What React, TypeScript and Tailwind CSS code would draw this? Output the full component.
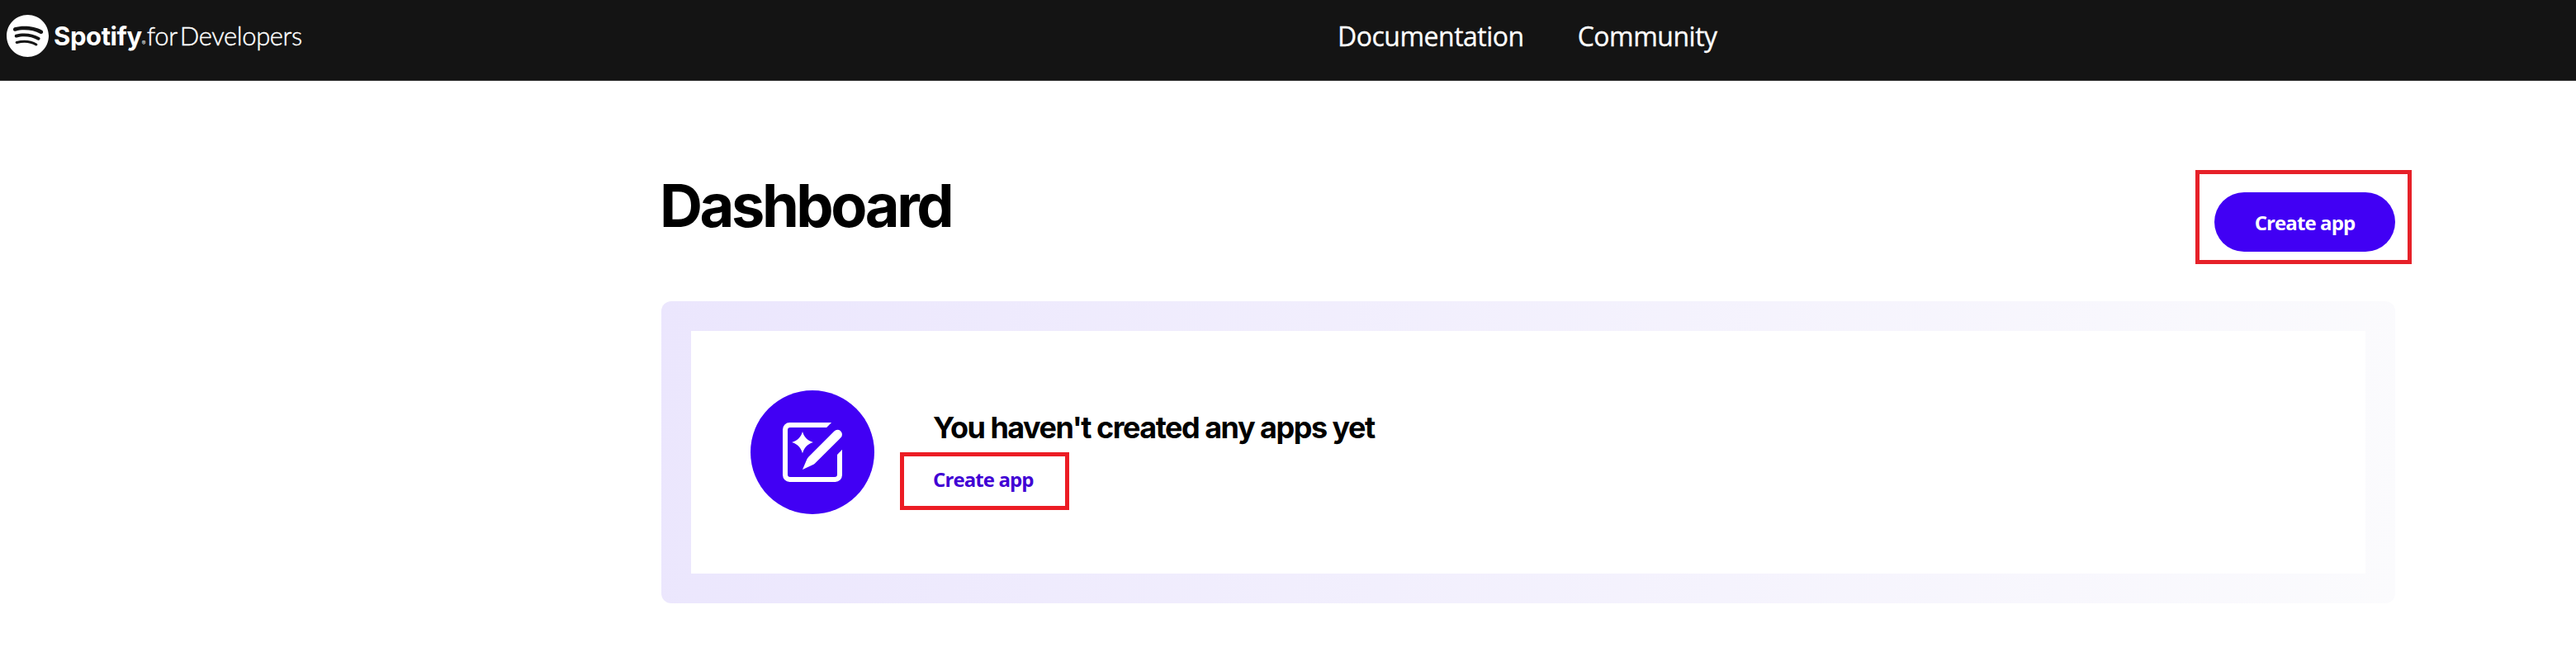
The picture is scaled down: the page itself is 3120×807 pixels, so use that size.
import { SiSpotify } from "react-icons/si";

function PencilIcon() {
  return (
    <svg viewBox="0 0 24 24" className="size-[72px]" fill="#fff" aria-hidden="true">
      <path d="M19.7 0H2.8A2.8 2.8 0 0 0 0 2.8v18.4A2.8 2.8 0 0 0 2.8 24h18.4a2.8 2.8 0 0 0 2.8-2.8V10.9l-2 2.1v8a1 1 0 0 1-1 1H3a1 1 0 0 1-1-1V3a1 1 0 0 1 1-1h14.7z" />
      <path d="M8 3.7c.7 2.3 2 3.6 4.3 4.3C10 8.7 8.7 10 8 12.4 7.3 10 6 8.7 3.7 8 6 7.3 7.3 6 8 3.7z" />
      <path d="M20.8 3.5a1.85 1.85 0 0 1 2.65 2.6L13.1 16.4c-.3.3-.6.5-1 .7L8 19l1.7-4c.2-.4.4-.8.7-1.1z" />
    </svg>
  );
}

function Header() {
  return (
    <header className="flex h-[98px] items-start border-b border-[#333] bg-[#141414] text-white">
      <a className="flex w-[1620px] items-start pl-[8px]">
        <SiSpotify className="mt-[18px] size-[51px]" />
        <span className="ml-[6px] flex items-baseline pt-[28px] leading-none">
          <span className="text-[31px] font-bold tracking-[-0.4px]">Spotify</span>
          <span className="w-[6px] text-[7px]">®</span>
          <span className="font-['Lato',sans-serif] text-[31px] font-light tracking-[-0.4px] [-webkit-text-stroke:0.4px_white]">for</span>
          <span className="ml-[3px] font-['Lato',sans-serif] text-[31px] font-light tracking-[-0.4px] [-webkit-text-stroke:0.4px_white]">Developers</span>
        </span>
      </a>
      <nav className="flex gap-[65px] pt-[28px] font-['Open_Sans',sans-serif] text-[32px] leading-none tracking-[-0.5px] [-webkit-text-stroke:0.3px_white]">
        <a>Documentation</a>
        <a>Community</a>
      </nav>
    </header>
  );
}

export default function App() {
  return (
    <div className="h-[807px] w-[3120px] overflow-hidden bg-white font-['Inter',sans-serif] text-black">
      <Header />
      <main className="ml-[801px] w-[2100px]">
        <div className="flex h-[267px] items-start justify-between">
          <h1 className="mt-[115px] -ml-[2px] text-[72px] leading-none font-bold tracking-[-3.4px]">Dashboard</h1>
          <div className="-mr-[20px] mt-[108px] flex h-[114px] w-[262px] justify-end border-[5px] border-[#e62129] pt-[22px] pr-[15px]">
            <button className="h-[72px] w-[219px] rounded-full bg-[#4100f4] pt-px font-['Open_Sans',sans-serif] text-[24px] leading-none font-bold tracking-[-0.9px] text-white">
              Create app
            </button>
          </div>
        </div>
        <section className="h-[366px] rounded-[12px] bg-[linear-gradient(100deg,#ebe6fd_0%,#fbfbfd_100%)] p-[36px]">
          <div className="flex h-[294px] items-start bg-white pt-[72px] pl-[72px]">
            <div className="flex size-[150px] items-center justify-center rounded-full bg-[#4100f4]">
              <PencilIcon />
            </div>
            <div className="ml-[31px] flex flex-col items-start pt-[27px]">
              <h2 className="ml-[40px] text-[36px] leading-none font-bold tracking-[-1.5px]">
                You haven't created any apps yet
              </h2>
              <div className="mt-[12px] flex h-[70px] w-[205px] items-start border-[5px] border-[#ec1c24] pt-[16px] pl-[35px]">
                <a className="font-['Open_Sans',sans-serif] text-[24px] leading-none font-bold tracking-[-0.9px] text-[#4100d4]">
                  Create app
                </a>
              </div>
            </div>
          </div>
        </section>
      </main>
    </div>
  );
}
